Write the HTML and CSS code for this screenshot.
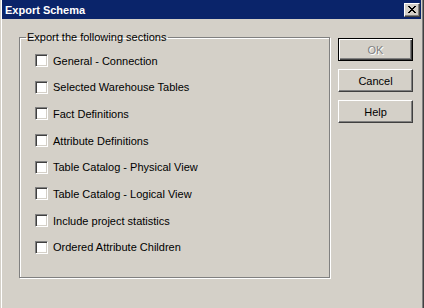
FILE: index.html
```html
<!DOCTYPE html>
<html lang="en">
<head>
    <meta charset="UTF-8">
    <title>Export Schema</title>
    <link rel="stylesheet" href="styles.css">
</head>
<body>
    <div class="window">
        <div class="titlebar">
            <span class="title">Export Schema</span>
            <button class="close" type="button">
                <svg width="8" height="7" viewBox="0 0 8 7"><path d="M0 0h2v1h1v1h2v-1h1v-1h2v1h-1v1h-1v1h-1v1h1v1h1v1h1v1h-2v-1h-1v-1h-2v1h-1v1h-2v-1h1v-1h1v-1h1v-1h-1v-1h-1v-1h-1z" fill="#000"/></svg>
            </button>
        </div>
        <div class="content">
            <fieldset class="group">
                <legend>Export the following sections</legend>
                <label class="option"><span class="check"></span>General - Connection</label>
                <label class="option"><span class="check"></span>Selected Warehouse Tables</label>
                <label class="option"><span class="check"></span>Fact Definitions</label>
                <label class="option"><span class="check"></span>Attribute Definitions</label>
                <label class="option"><span class="check"></span>Table Catalog - Physical View</label>
                <label class="option"><span class="check"></span>Table Catalog - Logical View</label>
                <label class="option"><span class="check"></span>Include project statistics</label>
                <label class="option"><span class="check"></span>Ordered Attribute Children</label>
            </fieldset>
            <div class="buttons">
                <button class="btn default" type="button" disabled>OK</button>
                <button class="btn" type="button">Cancel</button>
                <button class="btn" type="button">Help</button>
            </div>
        </div>
    </div>
</body>
</html>
```

FILE: styles.css
```css
body {
    margin: 0;
    width: 424px;
    height: 308px;
    overflow: hidden;
    background-color: #d4d0c8;
    font-family: "Liberation Sans", Arial, sans-serif;
    font-size: 11px;
    color: #000;
}

.window {
    height: 308px;
    border-left: 1px solid #d4d0c8;
    border-right: 1px solid #404040;
    box-shadow: inset 1px 0 0 #fff, inset -1px 0 0 #808080;
    padding: 0 2px 0 1px;
    box-sizing: border-box;
}

.titlebar {
    height: 19px;
    background-color: #0a246a;
    display: flex;
    align-items: center;
    justify-content: space-between;
    padding: 0 1px 0 3px;
}

.title {
    color: #fff;
    font-weight: bold;
    font-size: 11px;
}

.close {
    width: 16px;
    height: 14px;
    padding: 0;
    margin: 0;
    background-color: #d4d0c8;
    border: 1px solid;
    border-color: #fff #404040 #404040 #fff;
    box-shadow: inset -1px -1px 0 #808080;
    display: flex;
    align-items: center;
    justify-content: center;
}

.content {
    display: flex;
    align-items: flex-start;
    padding: 12px 0 0 17px;
}

.group {
    width: 311px;
    height: 247px;
    margin: 0;
    padding: 11px 0 0 15px;
    border: 1px solid #808080;
    box-shadow: 1px 1px 0 #fff, inset 1px 1px 0 #fff;
    box-sizing: border-box;
    display: flex;
    flex-direction: column;
    gap: 13.7px;
}

.group legend {
    padding: 0 2px 0 1px;
    margin-left: -9px;
}

.option {
    display: flex;
    align-items: center;
    height: 13px;
}

.check {
    width: 13px;
    height: 13px;
    margin-right: 5px;
    background-color: #fff;
    border: 1px solid;
    border-color: #808080 #fff #fff #808080;
    box-shadow: inset 1px 1px 0 #404040, inset -1px -1px 0 #d4d0c8;
    box-sizing: border-box;
}

.buttons {
    display: flex;
    flex-direction: column;
    gap: 8px;
    margin: 7px 0 0 8px;
}

.btn {
    width: 75px;
    height: 23px;
    padding: 0;
    font-family: "Liberation Sans", Arial, sans-serif;
    font-size: 11px;
    color: #000;
    background-color: #d4d0c8;
    border: 1px solid;
    border-color: #fff #404040 #404040 #fff;
    box-shadow: inset -1px -1px 0 #808080;
}

.btn.default {
    border: 1px solid #000;
    box-shadow: inset 1px 1px 0 #fff, inset -1px -1px 0 #404040, inset -2px -2px 0 #808080;
}

.btn:disabled {
    color: #808080;
    text-shadow: 1px 1px 0 #fff;
}
```
